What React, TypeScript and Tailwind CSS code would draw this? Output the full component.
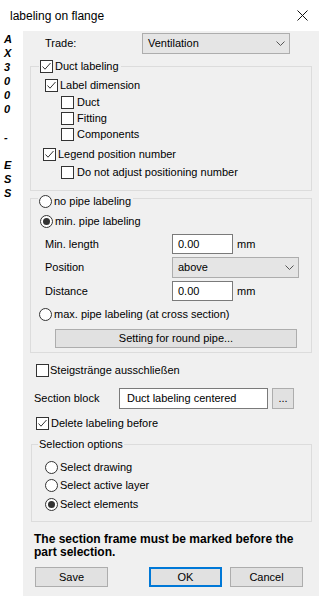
import React from "react";

const Check = ({ checked }: { checked?: boolean }) => (
  <span className="w-[13px] h-[13px] border border-[#333333] bg-white shrink-0 flex items-center justify-center">
    {checked && (
      <svg width="11" height="11" viewBox="0 0 11 11">
        <path d="M1.5 5.5 L4 8.2 L9.5 2" stroke="#333333" strokeWidth="1" fill="none" />
      </svg>
    )}
  </span>
);

const Radio = ({ checked }: { checked?: boolean }) => (
  <span className="w-[13px] h-[13px] rounded-full border border-[#333333] bg-white shrink-0 flex items-center justify-center">
    {checked && <span className="w-[7px] h-[7px] rounded-full bg-[#333333]" />}
  </span>
);

const Chevron = () => (
  <svg width="9" height="5" viewBox="0 0 9 5">
    <path d="M0.5 0.5 L4.5 4.5 L8.5 0.5" stroke="#555555" strokeWidth="1" fill="none" />
  </svg>
);

const Select = ({ value, w }: { value: string; w: string }) => (
  <div className={`${w} h-[21px] bg-[#e5e5e5] border border-[#adadad] flex items-center justify-between pl-[5px]`}>
    <span>{value}</span>
    <span className="w-[17px] flex justify-center">
      <Chevron />
    </span>
  </div>
);

const Input = ({ value, w }: { value: string; w: string }) => (
  <div className={`${w} h-[20px] bg-white border border-[#7a7a7a] flex items-center pl-[5px]`}>
    {value}
  </div>
);

const Row = ({ children, className = "" }: { children: React.ReactNode; className?: string }) => (
  <div className={`h-[16px] flex items-center ${className}`}>{children}</div>
);

export default function App() {
  const letters = ["A", "X", "3", "0", "0", "0", "\u00a0", "-", "\u00a0", "E", "S", "S"];
  return (
    <div
      className="w-[319px] h-[596px] bg-white text-black text-[11px] leading-none overflow-hidden flex flex-col"
      style={{ fontFamily: '"Liberation Sans", Arial, sans-serif' }}
    >
      {/* Title bar */}
      <div className="h-[31px] shrink-0 flex items-center justify-between pl-[10px] pr-[11px]">
        <span className="text-[12px]">labeling on flange</span>
        <svg width="11" height="11" viewBox="0 0 11 11">
          <path d="M0.5 0.5 L10.5 10.5 M10.5 0.5 L0.5 10.5" stroke="#111111" strokeWidth="1" />
        </svg>
      </div>

      <div className="flex flex-1">
        {/* Left strip */}
        <div className="w-[23px] shrink-0 bg-white flex flex-col items-start pl-[4px] pt-[1px]">
          {letters.map((l, i) => (
            <span key={i} className="h-[14px] leading-[14px] font-bold italic text-[11px]">
              {l}
            </span>
          ))}
        </div>

        {/* Panel */}
        <div className="flex-1 bg-[#f0f0f0] flex flex-col">
          {/* Trade */}
          <div className="mt-[2px] h-[21px] flex items-center">
            <span className="ml-[22px] w-[97px]">Trade:</span>
            <Select value="Ventilation" w="w-[148px]" />
          </div>

          {/* Group 1 */}
          <div className="relative mt-[12px] ml-[7px] w-[282px] border border-[#dcdcdc] pt-[10px] pb-[10px] flex flex-col">
            <div className="absolute -top-[9px] left-[8px] h-[16px] flex items-center bg-[#f0f0f0] pl-[1px] pr-[2px]">
              <Check checked />
              <span className="ml-[2px]">Duct labeling</span>
            </div>
            <Row className="pl-[14px]">
              <Check checked />
              <span className="ml-[2px]">Label dimension</span>
            </Row>
            <Row className="pl-[30px] mt-[1px]">
              <Check />
              <span className="ml-[3px]">Duct</span>
            </Row>
            <Row className="pl-[30px]">
              <Check />
              <span className="ml-[3px]">Fitting</span>
            </Row>
            <Row className="pl-[30px]">
              <Check />
              <span className="ml-[3px]">Components</span>
            </Row>
            <Row className="pl-[12px] mt-[4px]">
              <Check checked />
              <span className="ml-[2px]">Legend position number</span>
            </Row>
            <Row className="pl-[30px] mt-[2px]">
              <Check />
              <span className="ml-[3px]">Do not adjust positioning number</span>
            </Row>
          </div>

          {/* Group 2 */}
          <div className="relative mt-[7px] ml-[7px] w-[282px] border border-[#dcdcdc] pt-[14px] pb-[4px] flex flex-col">
            <div className="absolute -top-[6px] left-[7px] h-[16px] flex items-center bg-[#f0f0f0] pl-[1px] pr-[2px]">
              <Radio />
              <span className="ml-[2px]">no pipe labeling</span>
            </div>
            <Row className="pl-[9px]">
              <Radio checked />
              <span className="ml-[2px]">min. pipe labeling</span>
            </Row>
            <div className="mt-[5px] h-[20px] flex items-center pl-[14px]">
              <span className="w-[127px]">Min. length</span>
              <Input value="0.00" w="w-[61px]" />
              <span className="ml-[4px]">mm</span>
            </div>
            <div className="mt-[3px] h-[21px] flex items-center pl-[14px]">
              <span className="w-[127px]">Position</span>
              <Select value="above" w="w-[127px]" />
            </div>
            <div className="mt-[3px] h-[20px] flex items-center pl-[14px]">
              <span className="w-[127px]">Distance</span>
              <Input value="0.00" w="w-[61px]" />
              <span className="ml-[4px]">mm</span>
            </div>
            <Row className="pl-[8px] mt-[5px]">
              <Radio />
              <span className="ml-[2px]">max. pipe labeling (at cross section)</span>
            </Row>
            <div className="mt-[7px] ml-[24px] w-[242px] h-[19px] bg-[#e1e1e1] border border-[#adadad] flex items-center justify-center">
              Setting for round pipe...
            </div>
          </div>

          {/* Steigstränge */}
          <Row className="mt-[9px] pl-[13px]">
            <Check />
            <span className="ml-[1px]">Steigstränge ausschließen</span>
          </Row>

          {/* Section block */}
          <div className="mt-[10px] h-[21px] flex items-center pl-[11px]">
            <span className="w-[85px]">Section block</span>
            <div className="w-[149px] h-[21px] bg-white border border-[#7a7a7a] flex items-center pl-[7px]">
              Duct labeling centered
            </div>
            <div className="ml-[4px] w-[22px] h-[21px] bg-[#e1e1e1] border border-[#adadad] flex items-center justify-center">
              ...
            </div>
          </div>

          {/* Delete labeling */}
          <Row className="mt-[6px] pl-[13px]">
            <Check checked />
            <span className="ml-[2px]">Delete labeling before</span>
          </Row>

          {/* Selection options */}
          <div className="relative mt-[13px] ml-[8px] w-[281px] border border-[#dcdcdc] pt-[14px] pb-[9px] flex flex-col">
            <div className="absolute -top-[8px] left-[6px] h-[14px] flex items-center bg-[#f0f0f0] px-[1px]">
              Selection options
            </div>
            <Row className="pl-[13px]">
              <Radio />
              <span className="ml-[2px]">Select drawing</span>
            </Row>
            <Row className="pl-[13px] mt-[2px]">
              <Radio />
              <span className="ml-[2px]">Select active layer</span>
            </Row>
            <Row className="pl-[13px] mt-[3px]">
              <Radio checked />
              <span className="ml-[2px]">Select elements</span>
            </Row>
          </div>

          {/* Bold note */}
          <div className="mt-[11px] ml-[11px] text-[12px] font-bold leading-[13px]">
            The section frame must be marked before the
            <br />
            part selection.
          </div>

          {/* Buttons */}
          <div className="mt-[8px] ml-[12px] flex items-center">
            <div className="w-[73px] h-[20px] bg-[#e1e1e1] border border-[#adadad] flex items-center justify-center">
              Save
            </div>
            <div className="ml-[41px] w-[73px] h-[20px] bg-[#e1e1e1] border-2 border-[#0078d7] flex items-center justify-center">
              OK
            </div>
            <div className="ml-[8px] w-[73px] h-[20px] bg-[#e1e1e1] border border-[#adadad] flex items-center justify-center">
              Cancel
            </div>
          </div>
        </div>
      </div>
    </div>
  );
}
